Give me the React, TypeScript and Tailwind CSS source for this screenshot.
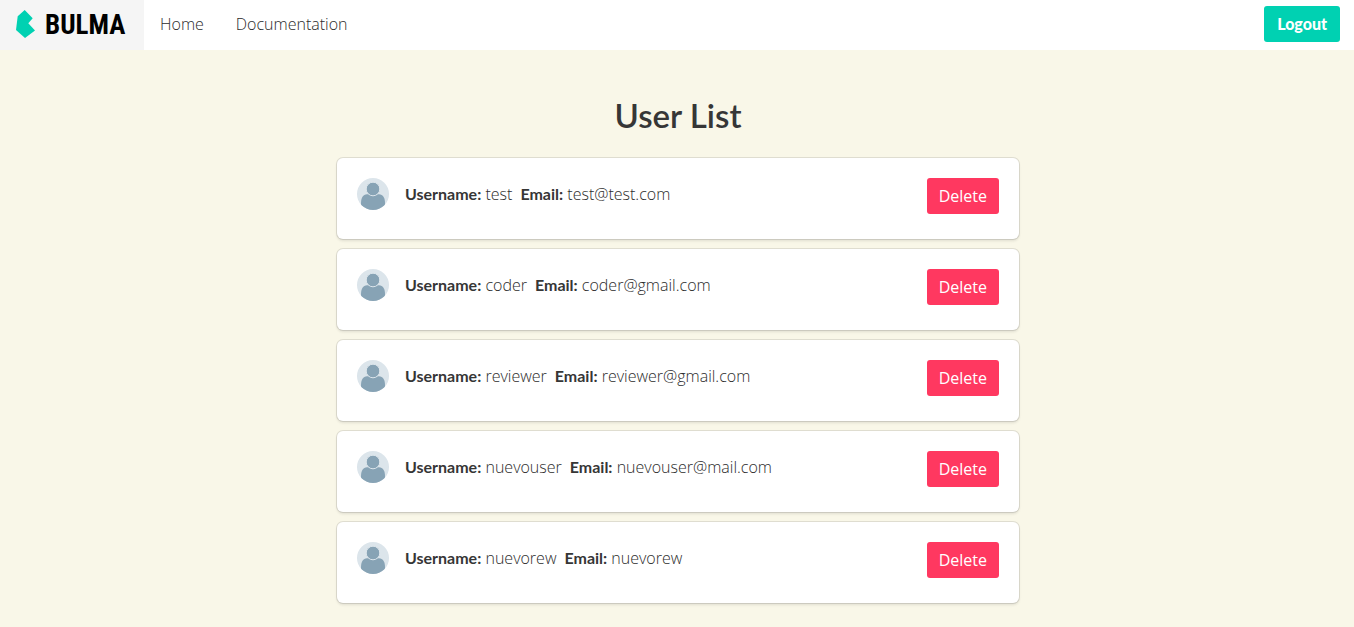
const users = [
  { username: 'test', email: 'test@test.com' },
  { username: 'coder', email: 'coder@gmail.com' },
  { username: 'reviewer', email: 'reviewer@gmail.com' },
  { username: 'nuevouser', email: 'nuevouser@mail.com' },
  { username: 'nuevorew', email: 'nuevorew' },
];

function Logo() {
  return (
    <a href="#" className="flex w-36 items-center bg-[#f5f5f5] pl-4">
      <svg className="mb-0.5" width="19" height="28" viewBox="0 0 19 28" aria-hidden="true">
        <path d="M8.7 0 16.7 8.3 12.3 13.2 19 20.4 9 28 0 20 1.7 6.3Z" fill="#00d1b2" />
      </svg>
      <span className="ml-2.5 font-['Liberation_Sans_Narrow','Roboto_Condensed',sans-serif] text-[27px] leading-8 font-bold text-black">
        BULMA
      </span>
    </a>
  );
}

function Avatar() {
  return (
    <svg className="size-8 shrink-0" viewBox="0 0 32 32" role="img" aria-label="User">
      <defs>
        <clipPath id="disc">
          <circle cx="16" cy="16" r="16" />
        </clipPath>
      </defs>
      <circle cx="16" cy="16" r="16" fill="#dce5eb" />
      <g clipPath="url(#disc)" fill="#87a3b5">
        <path d="M4 32V25C4 20 6 16.300 10 16.300H22C26 16.300 28 20 28 25V32Z" />
        <circle cx="16" cy="11" r="6.800" stroke="#dce5eb" strokeWidth="1" />
      </g>
    </svg>
  );
}

function UserCard({ username, email }: { username: string; email: string }) {
  return (
    <li className="flex min-h-[81px] items-start rounded-md bg-white p-5 shadow-[0_2px_3px_rgba(10,10,10,0.1),0_0_0_1px_rgba(10,10,10,0.1)]">
      <Avatar />
      <p className="ml-4 flex-1 pt-1 leading-6">
        <strong className="font-['Lato',sans-serif] font-bold text-[#363636]">Username:</strong> {username}
        <strong className="ml-2 font-['Lato',sans-serif] font-bold text-[#363636]">Email:</strong> {email}
      </p>
      <button type="button" className="h-9 rounded-[3px] bg-[#ff3860] px-3 font-normal text-white">
        Delete
      </button>
    </li>
  );
}

export default function App() {
  return (
    <div className="min-h-screen bg-[#f9f7e8] font-['Open_Sans',sans-serif] text-[16px] font-light text-[#2c2c2c]">
      <nav className="flex h-[50px] items-stretch bg-white">
        <Logo />
        <a href="#" className="flex items-center px-4 pb-0.5">Home</a>
        <a href="#" className="flex items-center px-4 pb-0.5">Documentation</a>
        <div className="ml-auto flex items-center pr-3.5 pb-0.5">
          <button type="button" className="h-9 rounded-[3px] bg-[#00d1b2] px-[13px] font-['Lato',sans-serif] font-black text-white">
            Logout
          </button>
        </div>
      </nav>
      <main className="flex flex-col items-center pt-11 pb-6 pl-0.5">
        <h1 className="font-['Lato',sans-serif] text-[33px] leading-[42px] font-semibold text-[#363636]">User List</h1>
        <ul className="mt-[22px] flex w-full flex-col gap-2.5 md:w-[calc(50%+6px)]">
          {users.map((user) => (
            <UserCard key={user.username} {...user} />
          ))}
        </ul>
      </main>
    </div>
  );
}
